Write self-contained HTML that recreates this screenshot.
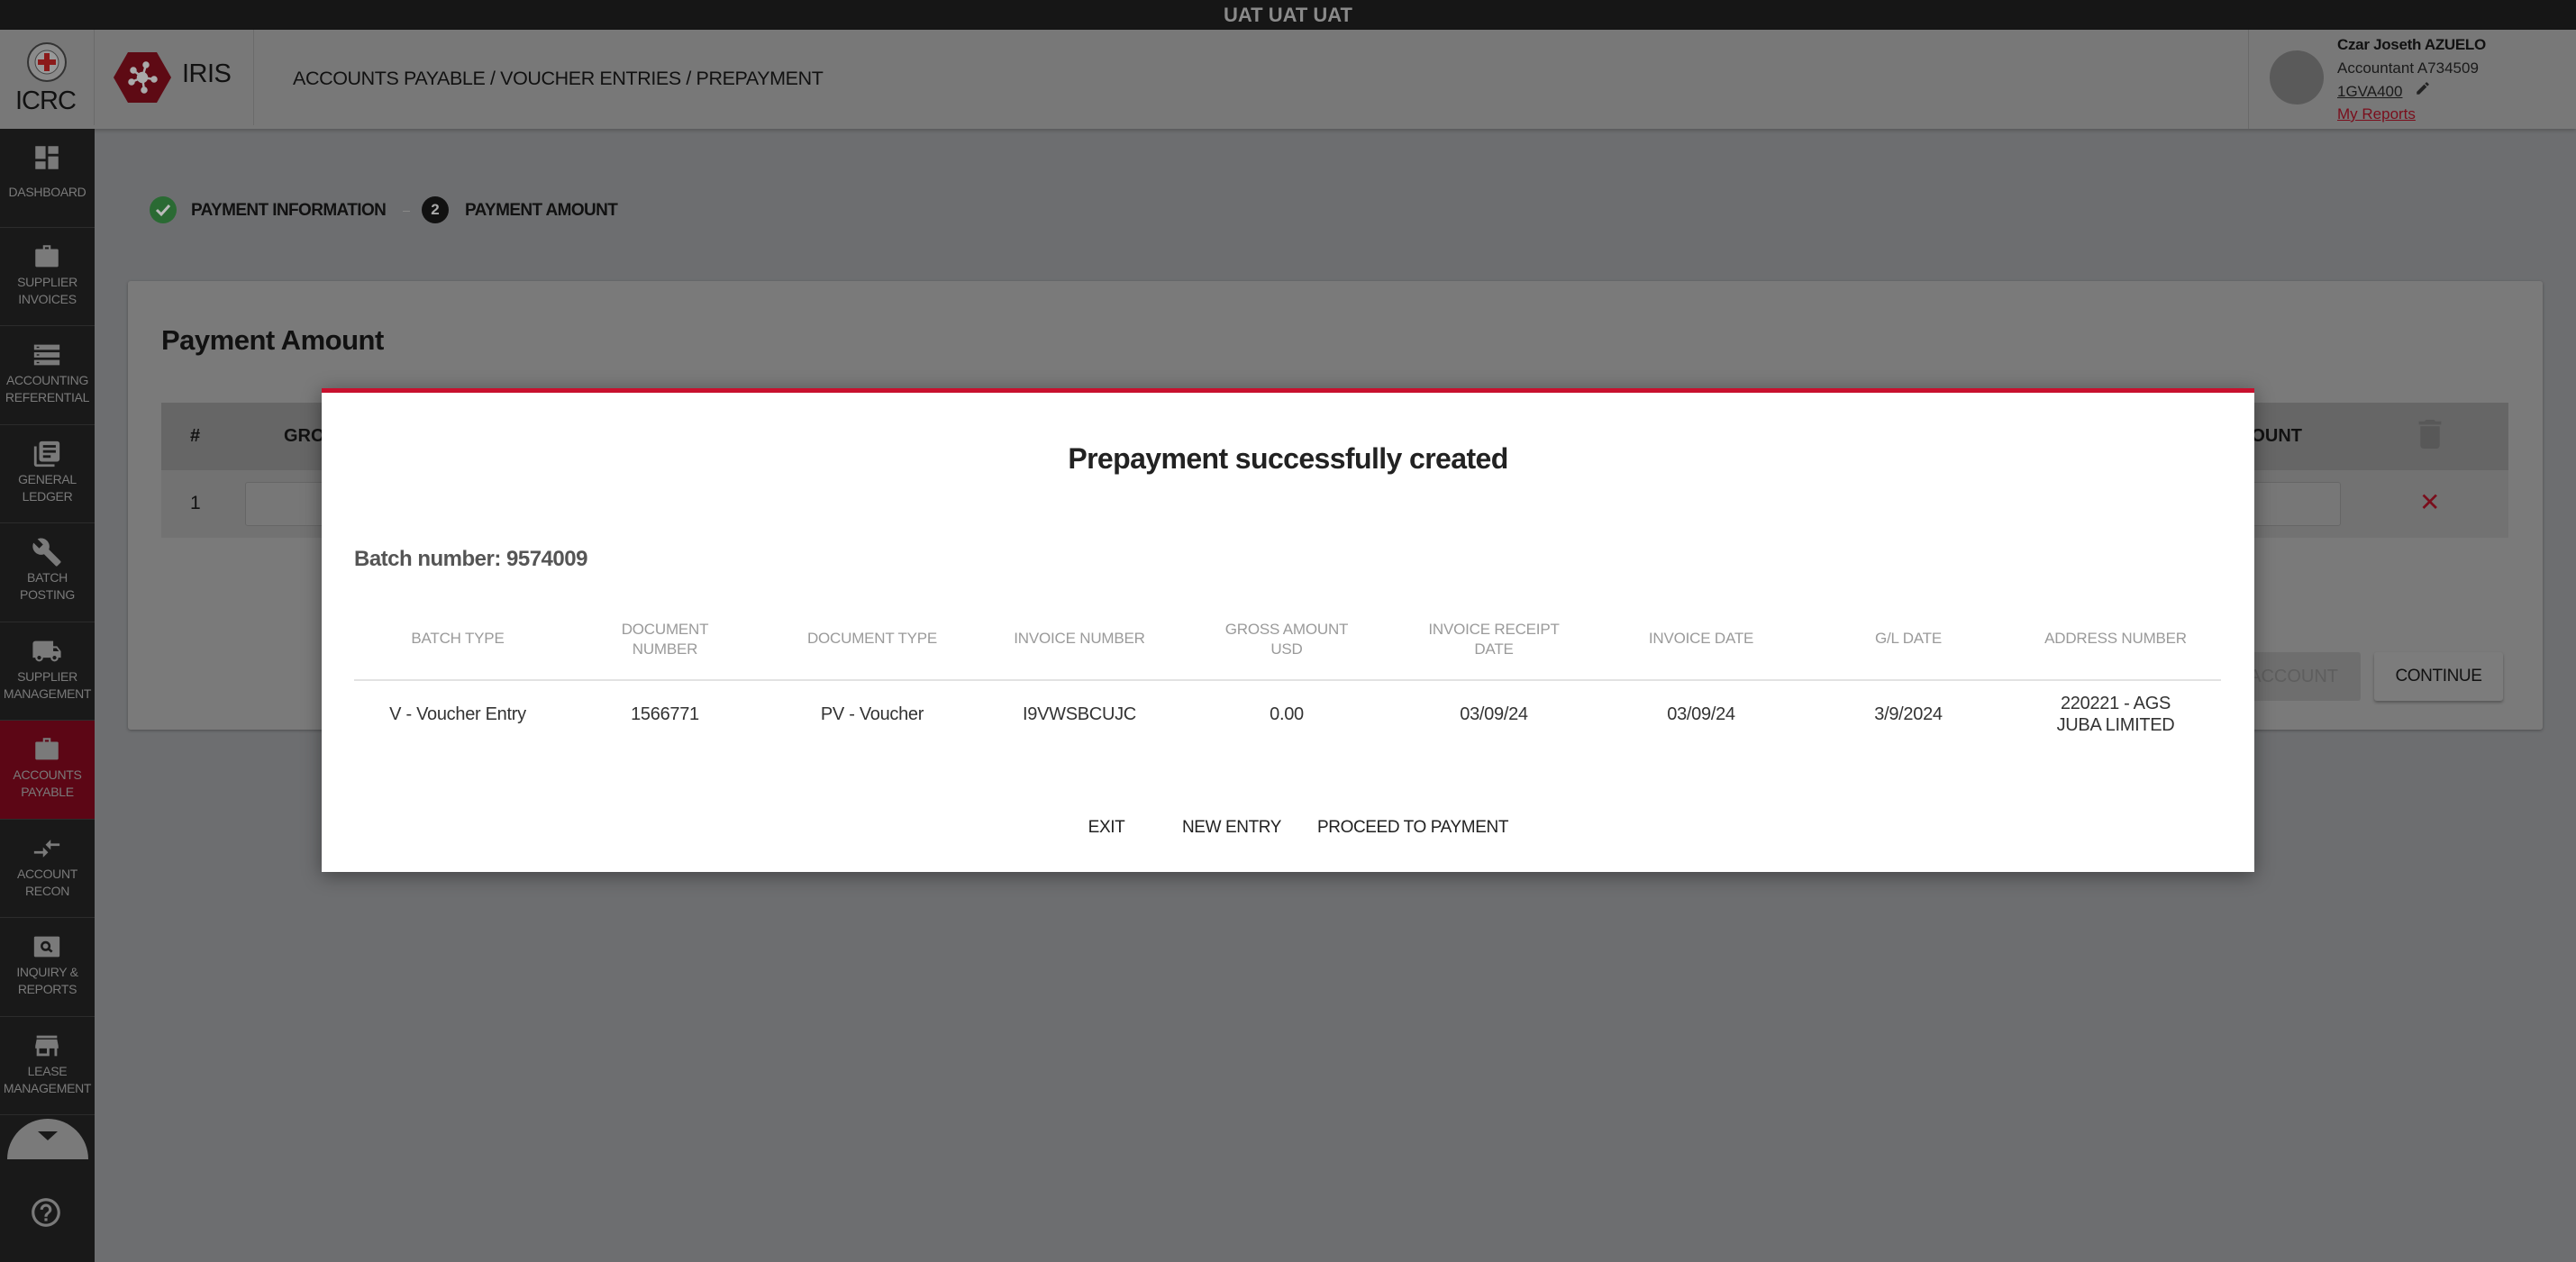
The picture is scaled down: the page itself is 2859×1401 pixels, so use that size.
<!DOCTYPE html>
<html><head><meta charset="utf-8"><style>
*{box-sizing:border-box;margin:0;padding:0}
body{width:2859px;height:1401px;overflow:hidden;background:#6d6e70;font-family:"Liberation Sans",sans-serif;position:relative}
.abs{position:absolute}
.top{left:0;top:0;width:2859px;height:33px;background:#161616;color:#8a8a8a;font-weight:bold;font-size:22px;text-align:center;line-height:33px}
.hdr{left:0;top:33px;width:2859px;height:110px;background:#787878;box-shadow:0 2px 4px rgba(0,0,0,.2)}
.side{left:0;top:143px;width:105px;height:1258px;background:#191919}
.item{position:absolute;left:0;width:105px;height:109.5px;border-bottom:1px solid #2c2c2c;color:#7a7a7a;font-size:14px;text-align:center;line-height:19px;letter-spacing:-0.3px}
.item svg{position:absolute;left:35px;top:15px}
.item .l{position:absolute;left:0;width:105px;top:51px}
.card{left:142px;top:312px;width:2680px;height:498px;background:#7a7a7a;border-radius:3px;box-shadow:0 1px 3px rgba(0,0,0,.3)}
.modal{left:357px;top:431px;width:2145px;height:537px;background:#fff;border-top:5px solid #c8102e;box-shadow:0 4px 20px rgba(0,0,0,.4)}
.th{position:absolute;width:230px;text-align:center;color:#9a9a9a;font-size:17px;line-height:22px;letter-spacing:-0.2px}
.td{position:absolute;width:230px;text-align:center;color:#333;font-size:20px;line-height:24px;letter-spacing:-0.3px}
.btn{position:absolute;font-size:19px;color:#222;font-weight:500;transform:translateX(-50%);white-space:nowrap;letter-spacing:-0.4px}
</style></head><body>
<div class="abs top">UAT UAT UAT</div>
<div class="abs hdr">
 <svg class="abs" style="left:29px;top:13px" width="46" height="46" viewBox="0 0 46 46"><circle cx="23" cy="23" r="21" fill="#8a8a8a" stroke="#333" stroke-width="2"/><circle cx="23" cy="23" r="13" fill="#999" stroke="#444" stroke-width="1"/><path d="M20 13h6v7h7v6h-7v7h-6v-7h-7v-6h7z" fill="#8b1a1a"/></svg>
 <div class="abs" style="left:17px;top:63px;font-size:29px;color:#111;letter-spacing:-1px">ICRC</div>
 <div class="abs" style="left:104px;top:0;width:1px;height:106px;background:#6a6a6a"></div>
 <svg class="abs" style="left:126px;top:25px" width="64" height="56" viewBox="0 0 64 56"><polygon points="16,0 48,0 64,28 48,56 16,56 0,28" fill="#5e0a14"/><g stroke="#aaa" stroke-width="2.5" fill="#aaa"><line x1="32" y1="28" x2="22" y2="20"/><line x1="32" y1="28" x2="36" y2="14"/><line x1="32" y1="28" x2="45" y2="30"/><line x1="32" y1="28" x2="34" y2="42"/><line x1="32" y1="28" x2="20" y2="33"/><circle cx="32" cy="28" r="5"/><circle cx="22" cy="20" r="2.5"/><circle cx="36" cy="14" r="2.5"/><circle cx="45" cy="30" r="2.5"/><circle cx="34" cy="42" r="2.5"/><circle cx="20" cy="33" r="2.5"/></g></svg>
 <div class="abs" style="left:202px;top:33px;font-size:29px;color:#111;letter-spacing:-0.5px">IRIS</div>
 <div class="abs" style="left:281px;top:0;width:1px;height:106px;background:#6a6a6a"></div>
 <div class="abs" style="left:325px;top:42px;font-size:21.5px;color:#111;letter-spacing:-0.4px">ACCOUNTS PAYABLE / VOUCHER ENTRIES / PREPAYMENT</div>
 <div class="abs" style="left:2495px;top:0;width:1px;height:110px;background:#6a6a6a"></div>
 <div class="abs" style="left:2519px;top:23px;width:60px;height:60px;border-radius:50%;background:#5a5a5a"></div>
 <div class="abs" style="left:2594px;top:7px;font-size:17px;font-weight:bold;color:#111;letter-spacing:-0.3px">Czar Joseth AZUELO</div>
 <div class="abs" style="left:2594px;top:33px;font-size:17px;color:#1a1a1a">Accountant A734509</div>
 <div class="abs" style="left:2594px;top:59px;font-size:17px;color:#1a1a1a;text-decoration:underline">1GVA400</div>
 <svg class="abs" style="left:2680px;top:56px" width="18" height="18" viewBox="0 0 24 24"><path d="M3 17.25V21h3.75L17.8 9.94l-3.75-3.75L3 17.25zM20.7 7.04a1 1 0 000-1.41l-2.34-2.34a1 1 0 00-1.41 0l-1.83 1.83 3.75 3.75 1.83-1.83z" fill="#222"/></svg>
 <div class="abs" style="left:2594px;top:84px;font-size:17px;color:#7a0e1c;text-decoration:underline">My Reports</div>
</div>
<div class="abs side">
 <div class="item" style="top:0"><svg width="34" height="34" viewBox="0 0 24 24"><path d="M3 13h8V3H3v10zm0 8h8v-6H3v6zm10 0h8V11h-8v10zm0-18v6h8V3h-8z" fill="#7a7a7a"/></svg><div class="l" style="top:61px">DASHBOARD</div></div>
 <div class="item" style="top:109.5px"><svg width="34" height="34" viewBox="0 0 24 24"><path d="M9 3h6v3h5a1 1 0 011 1v12a1 1 0 01-1 1H4a1 1 0 01-1-1V7a1 1 0 011-1h5zm1.5 1.5V6h3V4.5z" fill="#7a7a7a"/></svg><div class="l">SUPPLIER<br>INVOICES</div></div>
 <div class="item" style="top:219px"><svg width="34" height="34" viewBox="0 0 24 24"><path d="M2 4h20v4H2zm0 6h20v4H2zm0 6h20v4H2z" fill="#7a7a7a"/><rect x="4" y="5.5" width="2" height="1" fill="#191919"/><rect x="4" y="11.5" width="2" height="1" fill="#191919"/><rect x="4" y="17.5" width="2" height="1" fill="#191919"/></svg><div class="l">ACCOUNTING<br>REFERENTIAL</div></div>
 <div class="item" style="top:328.5px"><svg width="34" height="34" viewBox="0 0 24 24"><path d="M4 6H2v14a2 2 0 002 2h14v-2H4V6zm16-4H8a2 2 0 00-2 2v12a2 2 0 002 2h12a2 2 0 002-2V4a2 2 0 00-2-2zm-1 9H9V9h10v2zm-4 4H9v-2h6v2zm4-8H9V5h10v2z" fill="#7a7a7a"/></svg><div class="l">GENERAL<br>LEDGER</div></div>
 <div class="item" style="top:438px"><svg width="34" height="34" viewBox="0 0 24 24"><path d="M22.7 19l-9.1-9.1c.9-2.3.4-5-1.5-6.9-2-2-5-2.4-7.4-1.3L9 6 6 9 1.6 4.7C.4 7.1.9 10.1 2.9 12.1c1.9 1.9 4.6 2.4 6.9 1.5l9.1 9.1c.4.4 1 .4 1.4 0l2.3-2.3c.5-.4.5-1.1.1-1.4z" fill="#7a7a7a"/></svg><div class="l">BATCH<br>POSTING</div></div>
 <div class="item" style="top:547.5px"><svg width="34" height="34" viewBox="0 0 24 24"><path d="M20 8h-3V4H3a2 2 0 00-2 2v11h2a3 3 0 006 0h6a3 3 0 006 0h2v-5l-3-4zM6 18.5a1.5 1.5 0 110-3 1.5 1.5 0 010 3zm13.5-9l1.960 2.5H17V9.5h2.5zm-1.5 9a1.5 1.5 0 110-3 1.5 1.5 0 010 3z" fill="#7a7a7a"/></svg><div class="l">SUPPLIER<br>MANAGEMENT</div></div>
 <div class="item" style="top:657px;background:#5c0615"><svg width="34" height="34" viewBox="0 0 24 24"><path d="M9 3h6v3h5a1 1 0 011 1v12a1 1 0 01-1 1H4a1 1 0 01-1-1V7a1 1 0 011-1h5zm1.5 1.5V6h3V4.5z" fill="#7a7a7a"/></svg><div class="l">ACCOUNTS<br>PAYABLE</div></div>
 <div class="item" style="top:766.5px"><svg width="34" height="34" viewBox="0 0 24 24"><path d="M9.01 14H2v2h7.01v3L13 15l-3.99-4v3zm5.98-1v-3H22V8h-7.01V5L11 9l3.99 4z" fill="#7a7a7a"/></svg><div class="l">ACCOUNT<br>RECON</div></div>
 <div class="item" style="top:876px"><svg width="34" height="34" viewBox="0 0 24 24"><rect x="2" y="4" width="20" height="16" rx="1" fill="#7a7a7a"/><circle cx="11" cy="11.5" r="3" fill="none" stroke="#191919" stroke-width="1.8"/><line x1="13" y1="13.5" x2="16" y2="16" stroke="#191919" stroke-width="1.8"/></svg><div class="l">INQUIRY &amp;<br>REPORTS</div></div>
 <div class="item" style="top:985.5px"><svg width="34" height="34" viewBox="0 0 24 24"><path d="M20 4H4v2h16V4zm1 10v-2l-1-5H4l-1 5v2h1v6h10v-6h4v6h2v-6h1zm-9 4H6v-4h6v4z" fill="#7a7a7a"/></svg><div class="l">LEASE<br>MANAGEMENT</div></div>
 <div class="abs" style="left:8px;top:1099px;width:90px;height:45px;border-radius:45px 45px 0 0;background:#7a7a7a"></div>
 <div class="abs" style="left:42px;top:1113px;width:0;height:0;border-left:11px solid transparent;border-right:11px solid transparent;border-top:10px solid #191919"></div>
 <svg class="abs" style="left:32px;top:1184px" width="38" height="38" viewBox="0 0 24 24"><path d="M11 18h2v-2h-2v2zm1-16C6.48 2 2 6.480 2 12s4.48 10 10 10 10-4.48 10-10S17.52 2 12 2zm0 18c-4.41 0-8-3.59-8-8s3.59-8 8-8 8 3.59 8 8-3.59 8-8 8zm0-14c-2.21 0-4 1.79-4 4h2c0-1.1.9-2 2-2s2 .9 2 2c0 2-3 1.75-3 5h2c0-2.25 3-2.5 3-5 0-2.21-1.790-4-4-4z" fill="#7a7a7a"/></svg>
</div>
<!-- stepper -->
<svg class="abs" style="left:166px;top:218px" width="30" height="30" viewBox="0 0 30 30"><circle cx="15" cy="15" r="15" fill="#2a6a33"/><path d="M8 15l5 5 9-10" stroke="#bbb" stroke-width="3" fill="none"/></svg>
<div class="abs" style="left:212px;top:223px;font-size:19px;font-weight:bold;color:#111;letter-spacing:-0.6px">PAYMENT INFORMATION</div>
<div class="abs" style="left:447px;top:234px;width:8px;height:1px;background:#888"></div>
<div class="abs" style="left:468px;top:218px;width:30px;height:30px;border-radius:50%;background:#111;color:#aaa;font-size:17px;font-weight:bold;text-align:center;line-height:30px">2</div>
<div class="abs" style="left:516px;top:223px;font-size:19px;font-weight:bold;color:#111;letter-spacing:-0.6px">PAYMENT AMOUNT</div>
<!-- card -->
<div class="abs card"></div>
<div class="abs" style="left:179px;top:360px;font-size:31px;font-weight:bold;color:#111;letter-spacing:-0.5px">Payment Amount</div>
<div class="abs" style="left:179px;top:447px;width:2605px;height:75px;background:#666"></div>
<div class="abs" style="left:179px;top:522px;width:2605px;height:75px;background:#727272"></div>
<div class="abs" style="left:211px;top:473px;font-size:20px;font-weight:bold;color:#111">#</div>
<div class="abs" style="left:315px;top:473px;font-size:20px;font-weight:bold;color:#111">GROSS</div>
<div class="abs" style="left:2400px;top:473px;width:155px;text-align:right;font-size:20px;font-weight:bold;color:#111">AMOUNT</div>
<svg class="abs" style="left:2684px;top:466px" width="26" height="32" viewBox="0 0 14 18"><path d="M1 16a2 2 0 002 2h8a2 2 0 002-2V4H1v12zM14 1h-3.5l-1-1h-5l-1 1H0v2h14V1z" fill="#585858"/></svg>
<div class="abs" style="left:211px;top:547px;font-size:21px;color:#111">1</div>
<div class="abs" style="left:272px;top:535px;width:2326px;height:49px;border:1px solid #666;border-radius:3px;background:#777"></div>
<div class="abs" style="left:2685px;top:541px;font-size:28px;color:#7a0e1c">✕</div>
<div class="abs" style="left:2470px;top:724px;width:150px;height:54px;background:#6e6e6e;border-radius:3px;color:#5e5e5e;font-size:20px;line-height:54px;text-align:right;padding-right:25px">ACCOUNT</div>
<div class="abs" style="left:2635px;top:724px;width:143px;height:54px;background:#7c7c7c;border-radius:3px;box-shadow:0 2px 3px rgba(0,0,0,.3);color:#111;font-size:19px;font-weight:500;line-height:54px;text-align:center;letter-spacing:-0.4px">CONTINUE</div>
<!-- modal -->
<div class="abs modal">
 <div class="abs" style="left:0;top:55px;width:2145px;text-align:center;font-size:32px;font-weight:bold;color:#222;letter-spacing:-0.6px">Prepayment successfully created</div>
 <div class="abs" style="left:36px;top:171px;font-size:24px;font-weight:bold;color:#555;letter-spacing:-0.5px">Batch number: 9574009</div>
 <div class="th" style="left:36px;top:262px">BATCH TYPE</div>
 <div class="th" style="left:266px;top:252px">DOCUMENT<br>NUMBER</div>
 <div class="th" style="left:496px;top:262px">DOCUMENT TYPE</div>
 <div class="th" style="left:726px;top:262px">INVOICE NUMBER</div>
 <div class="th" style="left:956px;top:252px">GROSS AMOUNT<br>USD</div>
 <div class="th" style="left:1186px;top:252px">INVOICE RECEIPT<br>DATE</div>
 <div class="th" style="left:1416px;top:262px">INVOICE DATE</div>
 <div class="th" style="left:1646px;top:262px">G/L DATE</div>
 <div class="th" style="left:1876px;top:262px">ADDRESS NUMBER</div>
 <div class="abs" style="left:36px;top:318px;width:2072px;height:2px;background:#e2e2e2"></div>
 <div class="td" style="left:36px;top:345px">V - Voucher Entry</div>
 <div class="td" style="left:266px;top:345px">1566771</div>
 <div class="td" style="left:496px;top:345px">PV - Voucher</div>
 <div class="td" style="left:726px;top:345px">I9VWSBCUJC</div>
 <div class="td" style="left:956px;top:345px">0.00</div>
 <div class="td" style="left:1186px;top:345px">03/09/24</div>
 <div class="td" style="left:1416px;top:345px">03/09/24</div>
 <div class="td" style="left:1646px;top:345px">3/9/2024</div>
 <div class="td" style="left:1876px;top:333px">220221 - AGS<br>JUBA LIMITED</div>
 <div class="btn" style="left:871px;top:472px">EXIT</div>
 <div class="btn" style="left:1010px;top:472px">NEW ENTRY</div>
 <div class="btn" style="left:1211px;top:472px">PROCEED TO PAYMENT</div>
</div>
</body></html>
